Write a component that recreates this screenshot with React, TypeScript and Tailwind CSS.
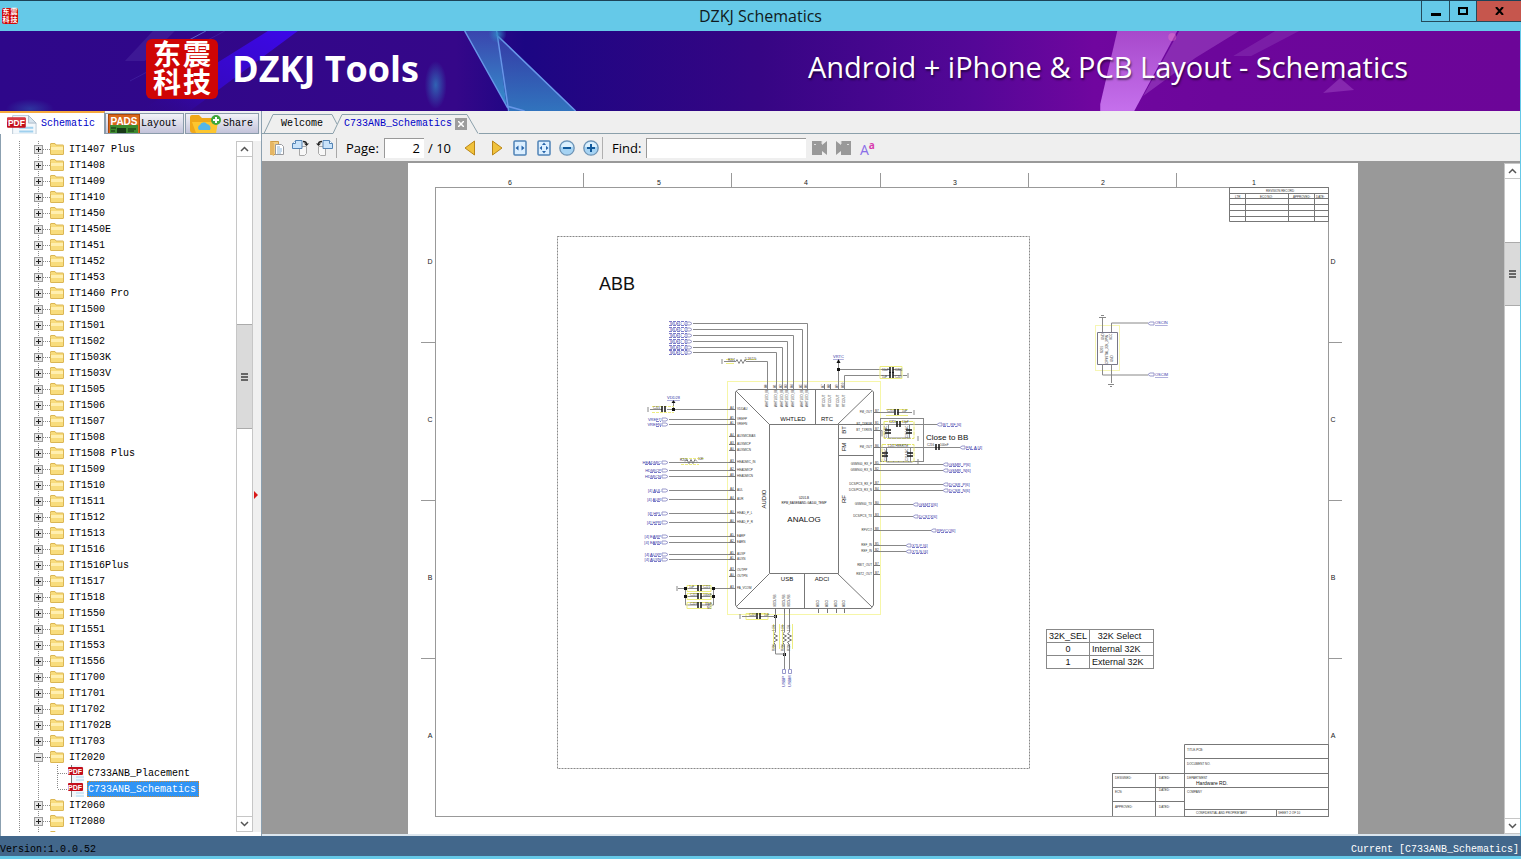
import { useState } from "react";

type Side = "left" | "right";

interface Net {
  y: number;
  x: number;
  name: string;
}

const FOLDERS_BEFORE = [
  "IT1407 Plus", "IT1408", "IT1409", "IT1410", "IT1450", "IT1450E", "IT1451", "IT1452", "IT1453",
  "IT1460 Pro", "IT1500", "IT1501", "IT1502", "IT1503K", "IT1503V", "IT1505", "IT1506", "IT1507",
  "IT1508", "IT1508 Plus", "IT1509", "IT1510", "IT1511", "IT1512", "IT1513", "IT1516", "IT1516Plus",
  "IT1517", "IT1518", "IT1550", "IT1551", "IT1553", "IT1556", "IT1700", "IT1701", "IT1702",
  "IT1702B", "IT1703",
];
// last folder has no name yet
const FOLDERS_AFTER = ["IT2060", "IT2080", ""];
const FILES = ["C733ANB_Placement", "C733ANB_Schematics"];

// ---------- icons ----------

function PdfIcon({ className }: { className: string }) {
  return (
    <svg viewBox="0 0 32 20" className={className} aria-hidden="true">
      <path d="M6 1h17l8 8v12H6z" fill="#f3f8fc" stroke="#b9c9d6" />
      <path d="M23 1v8h8z" fill="#d7e4ee" stroke="#a9b9c6" />
      <path d="M13 14h15M13 18h15" stroke="#9fd0ee" strokeWidth="2" />
      <rect x="0" y="3" width="20" height="11" rx="1" fill="#c40f1c" />
      <rect x="0" y="3" width="20" height="5" rx="1" fill="#d93a44" />
      <text x="10" y="12" textAnchor="middle" fontSize="9" fontWeight="700" fill="#fff" fontFamily="Liberation Sans, sans-serif">
        PDF
      </text>
    </svg>
  );
}

function PdfFileIcon() {
  return (
    <svg width="18" height="16" viewBox="0 0 18 16" className="shrink-0" aria-hidden="true">
      <path d="M3 0h10l3 3v13H3z" fill="#f1f7fb" />
      <path d="M3.500 0v16" stroke="#777" />
      <path d="M8 12h8M8 15h8" stroke="#a9d8f2" />
      <rect x="0" y="2" width="15" height="8" rx="1" fill="#c40f1c" />
      <text x="7" y="9" textAnchor="middle" fontSize="7" fontWeight="700" fill="#fff" fontFamily="Liberation Sans, sans-serif">
        PDF
      </text>
    </svg>
  );
}

function PadsIcon() {
  return (
    <svg width="32" height="19" viewBox="0 0 32 19" aria-hidden="true">
      <rect x="0.5" y="0.5" width="31" height="19" fill="#d8661a" stroke="#a9470c" />
      <rect x="2" y="11" width="28" height="8" fill="#3d8b2f" />
      <rect x="9" y="14" width="9" height="5" fill="#173a17" />
      <path d="M20 15h8M20 17h6M3 14h5M3 17h4" stroke="#102a10" strokeWidth="1" />
      <text x="16" y="11" textAnchor="middle" fontSize="10" fontWeight="700" fill="#fff" fontFamily="Liberation Sans, sans-serif">
        PADS
      </text>
    </svg>
  );
}

function ShareIcon() {
  return (
    <svg width="32" height="19" viewBox="0 0 32 19" aria-hidden="true">
      <path d="M0 3q0-2 2-2h7l3 3h12v15H3q-3 0-3-3z" fill="#f0a818" />
      <path d="M2 8h26l-2 11H6z" fill="#fdc62f" />
      <path d="M9 16a3 3 0 0 1 1-5 4 4 0 0 1 7-1 4 4 0 0 1 3 6z" fill="#55b6ea" />
      <circle cx="26" cy="6" r="5" fill="#3fa63c" />
      <path d="M26 3v6M23 6h6" stroke="#fff" strokeWidth="2" />
    </svg>
  );
}

function FolderIcon() {
  return (
    <svg width="14" height="12" viewBox="0 0 14 12" className="shrink-0" aria-hidden="true">
      <path d="M.5 2.5V1q0-.5.5-.5h4l1 1.500h7q.5 0 .5.5v8.500q0 .5-.5.5H1q-.5 0-.5-.5z" fill="#f8dc7c" stroke="#dbb654" />
      <path d="M1 4h12v3H1z" fill="#ffefb0" />
    </svg>
  );
}

function Expander({ open }: { open?: boolean }) {
  return (
    <svg width="16" height="16" viewBox="0 0 16 16" aria-hidden="true">
      <path d="M4.500 0V16M9 8.500H16" stroke="#8a8a8a" strokeDasharray="1 1" />
      <rect x=".5" y="4.500" width="8" height="8" fill="#e6e6e6" stroke="#9a9a9a" />
      <path d={open ? "M2 8.500H7" : "M2 8.500H7M4.500 6V11"} stroke="#222" />
    </svg>
  );
}

function Chevron({ down }: { down?: boolean }) {
  return (
    <svg width="9" height="6" viewBox="0 0 9 6" fill="none" aria-hidden="true">
      <path d={down ? "M1 1l3.500 3.500L8 1" : "M1 5l3.500-3.500L8 5"} stroke="#555" strokeWidth="1.500" />
    </svg>
  );
}

function OpenIcon() {
  return (
    <svg width="16" height="16" viewBox="0 0 16 16" aria-hidden="true">
      <path d="M1.500 1.500h8v13h-8z" fill="#f3cf85" stroke="#cc9b47" />
      <path d="M1 1l4 2v13l-4-2z" fill="#e5b664" />
      <path d="M6.500 4.500h6l2 2v8h-8z" fill="#fff" stroke="#999a9e" />
      <path d="M8 7h3M8 9h5M8 11h5M8 13h4" stroke="#8cb5da" />
    </svg>
  );
}

function RotateIcon({ flip }: { flip?: boolean }) {
  return (
    <svg width="17" height="16" viewBox="0 0 17 16" className={flip ? "-scale-x-100" : ""} aria-hidden="true">
      <path d="M7.500 6.500h7v7l-2 2h-5z" fill="#f7f7f7" stroke="#a8a8a8" />
      <path d="M3.500.5h6.500v8H.5v-5z" fill="#c9e3fa" stroke="#5484b5" />
      <path d="M3.500.5v3h-3" fill="#fff" stroke="#5484b5" />
      <path d="M11 1.500q3.500 0 3.500 2.500" fill="none" stroke="#222" strokeWidth="1.300" />
      <path d="M12 3.500h5L14.500 6z" fill="#222" />
    </svg>
  );
}

function TriangleIcon({ side }: { side: Side }) {
  return (
    <svg width="12" height="16" viewBox="0 0 12 16" aria-hidden="true">
      <path d={side === "left" ? "M10.500 1v14L1 8z" : "M1.500 1v14L11 8z"} fill="#f0c23c" stroke="#ba8618" strokeLinejoin="round" />
    </svg>
  );
}

function FitIcon({ full }: { full?: boolean }) {
  return (
    <svg width="14" height="16" viewBox="0 0 14 16" aria-hidden="true">
      <rect x="1" y="1" width="12" height="14" rx="1" fill="#dcefff" stroke="#4f83b6" strokeWidth="1.500" />
      <path d="M5.500 5.500v5L2.500 8zM8.500 5.500v5l3-2.500z" fill="#2866ab" />
      {full && (
        <>
          <rect x="5" y="5" width="4" height="6" fill="#dcefff" />
          <path d="M5 5h4L7 2.500zM5 11h4l-2 2.500z" fill="#2866ab" />
        </>
      )}
    </svg>
  );
}

function ZoomIcon({ plus }: { plus?: boolean }) {
  return (
    <svg width="16" height="16" viewBox="0 0 16 16" aria-hidden="true">
      <circle cx="8" cy="8" r="7.200" fill="#a6d3f3" stroke="#6d93b5" strokeWidth="1.300" />
      <path d="M2 7a6 5 0 0 1 12 0z" fill="#dcf0fd" />
      <path d={plus ? "M4 8h8M8 4v8" : "M4 8h8"} stroke="#125a9c" strokeWidth="2" />
    </svg>
  );
}

function FindIcon({ side }: { side: Side }) {
  return (
    <svg width="15" height="14" viewBox="0 0 15 14" className={side === "right" ? "-scale-x-100" : ""} aria-hidden="true">
      <path d="M0 0h10v4l5-4v14l-5-4v4H0z" fill="#999" />
      <path d="M2 3.500h2M10 0v3" stroke="#ddd" />
    </svg>
  );
}

// ---------- shared parts ----------

function Logo({ small }: { small?: boolean }) {
  return (
    <div
      className={
        small
          ? "grid size-4 grid-cols-2 place-items-center rounded-xs bg-[#d00a0a] text-[7px] leading-[7px] font-bold text-white"
          : "grid h-[60px] w-[72px] grid-cols-2 place-items-center rounded-md bg-[#cf0505] px-1.5 pb-1 text-[28px] leading-[28px] font-bold text-white"
      }
      style={{ fontFamily: '"Noto Sans CJK SC", sans-serif' }}
    >
      <span>东</span>
      <span>震</span>
      <span>科</span>
      <span>技</span>
    </div>
  );
}

function ScrollBar({ kind }: { kind: "tree" | "page" }) {
  const tree = kind === "tree";
  return (
    <div className={`flex shrink-0 flex-col border-x border-[#c6c6c6] bg-white ${tree ? "w-[17px]" : "w-4 border-r-0"}`}>
      <button aria-label="Scroll up" className="flex h-4 shrink-0 items-center justify-center border-y border-[#c6c6c6]">
        <Chevron />
      </button>
      <div className={tree ? "flex-[167]" : "flex-[63]"} />
      <div
        className={`flex shrink-0 flex-col items-center justify-center gap-px border-y border-[#ababab] bg-[#dadada] ${tree ? "h-[105px]" : "h-16"}`}
      >
        <span className="h-0.5 w-[7px] bg-[#666]" />
        <span className="h-0.5 w-[7px] bg-[#666]" />
        <span className="h-0.5 w-[7px] bg-[#666]" />
      </div>
      <div className={tree ? "flex-[387]" : "flex-[514]"} />
      <button aria-label="Scroll down" className="flex h-4 shrink-0 items-center justify-center border-y border-[#c6c6c6]">
        <Chevron down />
      </button>
    </div>
  );
}

function TitleBar() {
  return (
    <header className="grid h-[31px] shrink-0 grid-cols-3 items-center border-t border-[#1c4257] bg-[#65c9e8] text-[#101a20]">
      <div className="pb-px pl-0.5">
        <Logo small />
      </div>
      <h1 className="text-center text-[16px] leading-5">DZKJ Schematics</h1>
      <div className="flex h-[21px] self-start justify-self-end border-b border-[#24495a]">
        <button aria-label="Minimize" className="flex w-7 items-center justify-center border-l border-[#24495a]">
          <span className="mt-1.5 h-[3px] w-2.5 bg-black" />
        </button>
        <button aria-label="Maximize" className="flex w-[27px] items-center justify-center border-l border-[#24495a]">
          <span className="h-2 w-2.5 border-2 border-black" />
        </button>
        <button aria-label="Close" className="flex w-[45px] items-center justify-center border-l border-[#24495a] bg-[#c6564d]">
          <svg width="9" height="8" viewBox="0 0 9 8" aria-hidden="true">
            <path d="M1 0l7 8M8 0L1 8" stroke="#000" strokeWidth="2" />
          </svg>
        </button>
      </div>
    </header>
  );
}

function Banner() {
  return (
    <div className="relative flex h-20 shrink-0 items-center overflow-hidden border-r border-[#65c9e8]">
      <svg className="absolute inset-0 size-full" viewBox="0 0 1521 80" preserveAspectRatio="none" aria-hidden="true">
        <defs>
          <linearGradient id="bg">
            <stop offset="0" stopColor="#2e078a" />
            <stop offset=".3" stopColor="#350789" />
            <stop offset=".345" stopColor="#1c0683" />
            <stop offset=".5" stopColor="#360584" />
            <stop offset=".64" stopColor="#540797" />
            <stop offset=".72" stopColor="#70069f" />
            <stop offset=".8" stopColor="#6c069b" />
            <stop offset="1" stopColor="#6c0598" />
          </linearGradient>
          <linearGradient id="beam" x1="1" y1="0" x2="0" y2="1">
            <stop offset="0" stopColor="#3c08e8" />
            <stop offset=".6" stopColor="#3608c4" />
            <stop offset="1" stopColor="#2e078a" stopOpacity="0" />
          </linearGradient>
          <linearGradient id="shard" x1="0" y1="0" x2="0" y2="1">
            <stop offset="0" stopColor="#3a45ae" />
            <stop offset="1" stopColor="#368fcc" />
          </linearGradient>
          <linearGradient id="pink" x1="0" y1="0" x2="0" y2="1">
            <stop offset="0" stopColor="#a749cb" />
            <stop offset="1" stopColor="#c570ec" />
          </linearGradient>
          <radialGradient id="glow">
            <stop offset="0" stopColor="#2f86c4" stopOpacity=".9" />
            <stop offset="1" stopColor="#2f86c4" stopOpacity="0" />
          </radialGradient>
        </defs>
        <rect width="1521" height="80" fill="url(#bg)" />
        <path d="M145 30L175 0h-22L125 30z" fill="#4a2aa0" opacity=".5" />
        <path d="M178 15L206 0" stroke="#5a63c8" />
        <path d="M130 50L225 0" stroke="#4629a8" opacity=".6" />
        <path d="M268 0h30L190 80h-50z" fill="url(#beam)" />
        <ellipse cx="436" cy="54" rx="11" ry="24" fill="url(#glow)" opacity=".8" />
        <ellipse cx="30" cy="78" rx="24" ry="10" fill="url(#glow)" opacity=".4" />
        <path d="M465 0h32l10 75z" fill="url(#shard)" />
        <path d="M497 3l79 77h-66l-3-5z" fill="url(#shard)" opacity=".8" />
        <path d="M465 0l43 77M497 0l12 80M497 4l79 76M507 75l18 5" stroke="#6796e8" strokeWidth="1.500" fill="none" />
        <circle cx="498" cy="3" r="9" fill="url(#glow)" />
        <path d="M1118 0h60l-43 80h-34v-7z" fill="url(#pink)" />
        <path d="M1180 0h60l-44 27-52 38z" fill="#a04ac4" opacity=".55" />
        <path d="M1276 0h24l-48 25h-18z" fill="#9040b8" opacity=".4" />
        <path d="M1324 62l17-15 14 12z" fill="#a04ac4" opacity=".5" />
        <circle cx="1173" cy="6" r="4" fill="#f07cc8" opacity=".4" />
      </svg>
      <div className="relative flex flex-1 items-center justify-between pr-28 pb-1 pl-[146px] text-white">
        <div className="flex items-center gap-3.5">
          <Logo />
          <span className="text-[36px] leading-10 font-bold">DZKJ Tools</span>
        </div>
        <span className="pb-1 text-[29px] leading-10 text-shadow-[1px_2px_2px_#00000080]">Android + iPhone &amp; PCB Layout - Schematics</span>
      </div>
    </div>
  );
}

// ---------- sidebar ----------

function FolderRow({ name, open }: { name: string; open?: boolean }) {
  return (
    <li className="flex h-4 shrink-0 items-center">
      <button aria-label={`Toggle ${name}`} className="flex shrink-0">
        <svg width="34" height="16" aria-hidden="true">
          <path d="M19.500 0V16" stroke="#8a8a8a" strokeDasharray="1 1" />
        </svg>
        <Expander open={open} />
      </button>
      <FolderIcon />
      <span className="pt-0.5 pl-[5px] whitespace-pre">{name}</span>
    </li>
  );
}

function FileRow({ name, last, selected, onSelect }: { name: string; last: boolean; selected: boolean; onSelect: () => void }) {
  return (
    <li className="flex h-4 shrink-0 items-center">
      <svg width="68" height="16" className="shrink-0" aria-hidden="true">
        <path d={`M19.500 0V16M38.500 0V16M57.500 0V${last ? 8 : 16}M58 8.500H68`} stroke="#8a8a8a" strokeDasharray="1 1" />
      </svg>
      <PdfFileIcon />
      <button
        onClick={onSelect}
        className={
          selected
            ? "ml-px h-4 border border-dotted border-[#d08a30] bg-[#2f94f5] pr-0.5 leading-4 text-white"
            : "ml-px h-4 border border-transparent leading-4"
        }
      >
        {name}
      </button>
    </li>
  );
}

function Sidebar() {
  const [selected, setSelected] = useState("C733ANB_Schematics");

  return (
    <aside className="flex w-[261px] shrink-0 flex-col bg-white font-[Liberation_Mono,monospace] text-[10px] leading-4">
      <div className="flex h-[23px] shrink-0 items-end border-[#8ba0b0] bg-[#efeff2]">
        <button className="flex h-full w-[105px] items-center gap-1 border-t-2 border-r border-t-[#f5a83c] border-r-[#8b9cab] bg-white pl-[7px] text-[#0000c8]">
          <PdfIcon className="h-5 w-[30px]" />
          Schematic
        </button>
        <button className="flex h-[21px] w-[79px] items-center gap-px border border-[#8b9cab] bg-linear-to-b from-[#f3f3f8] to-[#c3c3da] pl-[2px]">
          <PadsIcon />
          Layout
        </button>
        <button className="ml-px flex h-[21px] w-[74px] items-center gap-px border border-[#8b9cab] bg-linear-to-b from-[#f3f3f8] to-[#c3c3da] pl-[4px]">
          <ShareIcon />
          Share
        </button>
      </div>
      <div className="flex min-h-0 flex-1 border-l border-[#8ba0b0] pt-[7px] pb-1">
        <ul className="-ml-px flex min-w-0 flex-1 flex-col overflow-hidden">
          {FOLDERS_BEFORE.map(name => (
            <FolderRow key={name} name={name} />
          ))}
          <FolderRow name="IT2020" open />
          {FILES.map((name, i) => (
            <FileRow
              key={name}
              name={name}
              last={i === FILES.length - 1}
              selected={selected === name}
              onSelect={() => setSelected(name)}
            />
          ))}
          {FOLDERS_AFTER.map(name => (
            <FolderRow key={name} name={name} />
          ))}
        </ul>
        <ScrollBar kind="tree" />
        {/* splitter */}
        <div className="flex w-2 items-center bg-[#f0f0f0] pt-4">
          <svg width="5" height="8" viewBox="0 0 5 8" aria-hidden="true">
            <path d="M1 0l4 4-4 4z" fill="#d81818" />
          </svg>
        </div>
      </div>
    </aside>
  );
}

// ---------- document view ----------

function DocTabs() {
  return (
    <div className="flex h-[23px] shrink-0 items-end font-[Liberation_Mono,monospace] text-[10px] leading-4">
      <button className="relative h-5 w-[71px] pl-[9px]">
        <svg width="80" height="20" className="absolute top-0 left-0" fill="none" aria-hidden="true">
          <path d="M0 19.500H2L11 .5H70L75 10M2 19.500H71" stroke="#8ba0ab" />
        </svg>
        <span className="relative">Welcome</span>
      </button>
      <div className="relative flex h-5 w-[146px] items-center gap-[3px] pl-[11px]">
        <svg width="146" height="20" className="absolute top-0 left-0" fill="none" aria-hidden="true">
          <path d="M0 19.500L9 .5H134L145 19.500" stroke="#8ba0ab" fill="#efefef" />
        </svg>
        <button className="relative text-[#0000c8]">C733ANB_Schematics</button>
        <button aria-label="Close tab" className="relative flex size-3 items-center justify-center bg-[#9d9d9d]">
          <svg width="6" height="6" viewBox="0 0 6 6" aria-hidden="true">
            <path d="M0 0l6 6M6 0L0 6" stroke="#fff" strokeWidth="1.500" />
          </svg>
        </button>
      </div>
      <div className="h-5 flex-1 border-b border-[#8ba0ab]" />
    </div>
  );
}

function Toolbar() {
  return (
    <div className="flex h-[29px] shrink-0 items-center border-b-2 border-[#999] pl-[7px] text-[13px] leading-5 text-black">
      <div className="flex h-5 items-center gap-[7px] border-r border-[#a8a8a8] pr-[3px]">
        <button aria-label="Open"><OpenIcon /></button>
        <button aria-label="Rotate right"><RotateIcon /></button>
        <button aria-label="Rotate left"><RotateIcon flip /></button>
      </div>
      <label htmlFor="page" className="w-[47px] pl-[9px]">Page:</label>
      <input
        id="page"
        defaultValue="2"
        className="h-5 w-10 border-t border-l border-[#999] bg-white pr-1 text-right outline-none"
      />
      <span className="w-10 pl-1">/ 10</span>
      <div className="flex h-[22px] items-center gap-[10px] border-r border-[#b0b0b0] pr-[3px]">
        <button aria-label="Previous page" className="pr-[5px]"><TriangleIcon side="left" /></button>
        <button aria-label="Next page"><TriangleIcon side="right" /></button>
        <button aria-label="Fit width"><FitIcon /></button>
        <button aria-label="Fit page"><FitIcon full /></button>
        <div className="-ml-0.5 flex gap-2">
          <button aria-label="Zoom out"><ZoomIcon /></button>
          <button aria-label="Zoom in"><ZoomIcon plus /></button>
        </div>
      </div>
      <label htmlFor="find" className="w-[43px] pl-[9px]">Find:</label>
      <input id="find" className="h-5 w-40 border-t border-l border-[#999] bg-white px-1 outline-none" />
      <div className="flex items-center gap-[9px] pl-1.5">
        <button aria-label="Find previous"><FindIcon side="left" /></button>
        <button aria-label="Find next"><FindIcon side="right" /></button>
        <button aria-label="Match case" className="flex items-start">
          <span className="pt-1 text-[14px] leading-3.5 text-[#8a6ee8]">A</span>
          <span className="text-[10px] leading-3 font-bold text-[#d83cae]">a</span>
        </button>
      </div>
    </div>
  );
}

// ---------- schematic sheet ----------

const LEFT_NETS: Net[] = [
  { y: 419, x: 652, name: "VREFT" },
  { y: 424, x: 652, name: "VREFN" },
  { y: 462, x: 641, name: "HEADMIC" },
  { y: 470, x: 646, name: "HDMICP" },
  { y: 476, x: 646, name: "HDMICN" },
  { y: 490, x: 649, name: "[4] AUL" },
  { y: 499, x: 649, name: "[4] AUR" },
  { y: 513, x: 646, name: "[4] HPL" },
  { y: 522, x: 646, name: "[4] HPR" },
  { y: 536, x: 649, name: "[4] EARP" },
  { y: 542, x: 649, name: "[4] EARN" },
  { y: 554, x: 646, name: "[4] AUXP" },
  { y: 559, x: 646, name: "[4] AUXN" },
];

const RIGHT_NETS: Net[] = [
  { y: 424, x: 937, name: "BT_RF [6]" },
  { y: 447, x: 960, name: "FM_A [4]" },
  { y: 464, x: 943, name: "GSMR_P[6]" },
  { y: 470, x: 943, name: "GSMR_N[6]" },
  { y: 484, x: 943, name: "DCSR_P[6]" },
  { y: 490, x: 943, name: "DCSR_N[6]" },
  { y: 504, x: 913, name: "GSMTX[6]" },
  { y: 516, x: 913, name: "DCSTX[6]" },
  { y: 530, x: 931, name: "RFVCO[6]" },
  { y: 545, x: 906, name: "XTLP [6]" },
  { y: 551, x: 906, name: "XTLN [6]" },
];

const TOP_NETS = [
  { y: 323, x: 807 }, { y: 329, x: 802 }, { y: 335, x: 793 },
  { y: 341, x: 787 }, { y: 347, x: 782 }, { y: 352, x: 776 },
];

const LEFT_PINS = [
  [409, "VDDAU"], [419, "VREFP"], [424, "VREFN"], [436, "AUXMICBIAS"], [444, "AUXMICP"], [450, "AUXMICN"],
  [462, "HEADMIC_IN"], [470, "HEADMICP"], [476, "HEADMICN"], [490, "AUL"], [499, "AUR"], [513, "HEAD_P_L"],
  [522, "HEAD_P_R"], [536, "EARP"], [542, "EARN"], [554, "AUXP"], [559, "AUXN"], [570, "OUTPP"],
  [576, "OUTPN"], [588, "PA_VCOM"],
] as const;

const RIGHT_PINS = [
  [412, "FM_OUT"], [424, "BT_TXRXP"], [430, "BT_TXRXN"], [447, "FM_OUT"], [464, "GSM900_RX_P"], [470, "GSM900_RX_N"],
  [484, "DCS/PCS_RX_P"], [490, "DCS/PCS_RX_N"], [504, "GSM900_TX"], [516, "DCS/PCS_TX"], [530, "RFVCO"],
  [545, "REF_IN"], [551, "REF_IN"], [565, "RBIT_OUT"], [574, "RBT2_OUT"],
] as const;

function Cap({ x, y, vertical }: { x: number; y: number; vertical?: boolean }) {
  return (
    <path
      d={vertical ? `M${x - 3} ${y - 1}h6M${x - 3} ${y + 2}h6` : `M${x - 1} ${y - 3}v6M${x + 2} ${y - 3}v6`}
      stroke="#111"
      strokeWidth="1.500"
    />
  );
}

function Schematic() {
  return (
    <svg width="950" height="671" viewBox="408 163 950 671" fill="none" fontFamily="Liberation Sans, sans-serif" aria-label="Schematic sheet 2">
      {/* sheet frame */}
      <rect x="435.500" y="187.500" width="893" height="629" stroke="#999" />
      <path
        d="M583.500 173v14M731.500 173v14M880.500 173v14M1028.500 173v14M1176.500 173v14M421 342.500h14M421 500.500h14M421 658.500h14M1328 342.500h14M1328 500.500h14M1328 658.500h14"
        stroke="#999"
      />
      <g fontSize="7" fill="#222" textAnchor="middle">
        {[510, 659, 806, 955, 1103, 1254].map((x, i) => (
          <text key={x} x={x} y="185">{6 - i}</text>
        ))}
        {["D", "C", "B", "A"].map((c, i) => (
          <g key={c}>
            <text x="430" y={264 + i * 158}>{c}</text>
            <text x="1333" y={264 + i * 158}>{c}</text>
          </g>
        ))}
      </g>
      <rect x="557.500" y="236.500" width="472" height="532" stroke="#888" strokeDasharray="2 1" />
      <text x="599" y="290" fontSize="18" fill="#111">ABB</text>

      {/* revision record */}
      <path
        d="M1229.500 187.500h99v34h-99zM1229 193.500h99M1229 198.500h99M1229 204.500h99M1229 210.500h99M1229 216.500h99M1245.500 193v28M1288.500 193v28M1314.500 193v28"
        stroke="#777"
      />
      <g fontSize="3" fill="#333">
        <text x="1266" y="192">REVISION RECORD</text>
        <text x="1235" y="198">LTR</text>
        <text x="1260" y="198">ECO NO:</text>
        <text x="1293" y="198">APPROVED:</text>
        <text x="1316" y="198">DATE:</text>
      </g>

      {/* chip body */}
      <rect x="727.500" y="381.500" width="153" height="233" stroke="#f6f6a8" />
      <g stroke="#777">
        <path d="M738 389.500H871L873.500 392V605L871 608.500H738L735.500 605V392z" />
        <path d="M769.500 424.500H838.500V573.500H769.500zM736 391L769 424M872 391L838 424M736 607L769 574M872 607L838 574" />
        <path d="M815.500 390v34M769 424.500h69M838.500 424.500H873M838 438.500h35M838 455.500h35M804.500 573v35" />
      </g>
      <g fill="#111" textAnchor="middle" fontSize="6">
        <text x="793" y="421">WHTLED</text>
        <text x="827" y="421">RTC</text>
        <text x="787" y="581">USB</text>
        <text x="822" y="581">ADCI</text>
        <text transform="translate(766 499) rotate(-90)">AUDIO</text>
        <text transform="translate(846 430) rotate(-90)">BT</text>
        <text transform="translate(846 447) rotate(-90)">FM</text>
        <text transform="translate(846 499) rotate(-90)">RF</text>
        <text x="804" y="522" fontSize="8">ANALOG</text>
        <text x="804" y="499" fontSize="3">U201-B</text>
        <text x="804" y="504" fontSize="3">RPM_BASEBAND-GA100_TEMP</text>
      </g>

      {/* pins */}
      <g fontSize="3" fill="#333">
        {LEFT_PINS.map(([y, name]) => (
          <g key={y}>
            <text x="737" y={y + 1}>{name}</text>
            <text x="730" y={y}>A{y % 9}</text>
            <path d={`M729 ${y + 0.5}h6`} stroke="#777" />
          </g>
        ))}
        {RIGHT_PINS.map(([y, name]) => (
          <g key={y}>
            <text x="872" y={y + 1} textAnchor="end">{name}</text>
            <text x="875" y={y}>B{y % 9}</text>
            <path d={`M874 ${y + 0.5}h6`} stroke="#777" />
          </g>
        ))}
        {[767, 776, 782, 787, 793, 802, 807, 824, 830, 838, 844].map((x, i) => (
          <g key={x}>
            <text transform={`translate(${x + 1} 407) rotate(-90)`}>{i < 7 ? "WHTLED_IB" : "RTCOUT"}</text>
            <text transform={`translate(${x} 388) rotate(-90)`}>A{i}</text>
            <path d={`M${x + 0.5} 384v6`} stroke="#777" />
          </g>
        ))}
        {[775, 784, 789, 818, 827, 836, 844].map((x, i) => (
          <g key={x}>
            <text transform={`translate(${x + 1} 607) rotate(-90)`}>{i < 3 ? "VDDUSB" : "ADCI"}</text>
            <path d={`M${x + 0.5} 608v5`} stroke="#777" />
          </g>
        ))}
      </g>

      {/* white led bus */}
      {TOP_NETS.map((n, i) => (
        <g key={n.y}>
          <path d={`M693 ${n.y + 0.5}H${n.x + 0.5}V389`} stroke="#888" />
          <path d={`M687 ${n.y - 1}h3l2 1.500-2 1.500h-3z`} stroke="#99c" />
          <text x="686" y={n.y + 2} textAnchor="end" fontSize="4" fill="#3838a8">WLED_{i}</text>
          <path d={`M669 ${n.y - 1.5}h18M669 ${n.y + 2.5}h18`} stroke="#7a7ac8" strokeDasharray="3 1" />
        </g>
      ))}
      <path d="M724 361.500h12l1-2 2 4 2-4 2 4 2-4 1 2H767.500V389M722 359v5" stroke="#888" />
      <path d="M726 359.500h8M746 359.500h10M726 363.500h8" stroke="#eded80" />
      <text x="728" y="361" fontSize="3" fill="#333">R201</text>
      <text x="745" y="360" fontSize="3" fill="#333">5.1K/1%</text>

      {/* left nets */}
      {LEFT_NETS.map(n => (
        <g key={n.y}>
          <path d={`M669 ${n.y + 0.5}H729`} stroke="#888" />
          <path d={`M662 ${n.y - 1}h4l2 1.500-2 1.500h-4z`} stroke="#99c" />
          <text x="661" y={n.y + 2} textAnchor="end" fontSize="4" fill="#3838a8">{n.name}</text>
          <path d={`M${n.x + 4} ${n.y + 2.5}H661`} stroke="#7a7ac8" strokeDasharray="3 1" />
        </g>
      ))}
      <path d="M650 409.500h12M667 409.500h62M648 407v5M673.500 409v-7" stroke="#888" />
      <path d="M652 406.500h22M652 412.500h22M681 458.500h23M681 464.500h18" stroke="#eded80" strokeDasharray="3 1" />
      <Cap x={663} y={409} />
      <path d="M671.500 403h4l-2-3zM672 408h3v3h-3z" fill="#111" />
      <text x="667" y="399" fontSize="4" fill="#3838a8" textDecoration="underline">VDD28</text>
      <text x="653" y="409" fontSize="3" fill="#333">C201</text>
      <path d="M685 461.500l2-2 2 4 2-4 2 4 2-4 2 2" stroke="#777" />
      <text x="680" y="461" fontSize="3" fill="#333">R205</text>
      <text x="698" y="460" fontSize="3" fill="#333">10K</text>

      {/* right nets */}
      {RIGHT_NETS.map(n => (
        <g key={n.y}>
          <path d={`M880 ${n.y + 0.5}H${n.x}`} stroke="#888" />
          <path d={`M${n.x + 5} ${n.y - 1}h-3l-2 1.500 2 1.500h3z`} stroke="#99c" />
          <text x={n.x + 6} y={n.y + 2} fontSize="4" fill="#3838a8">{n.name}</text>
          <path d={`M${n.x + 6} ${n.y + 2.5}h14`} stroke="#7a7ac8" strokeDasharray="3 1" />
        </g>
      ))}

      {/* rtc supply */}
      <path d="M838.500 389V360M838 369.500h52M844.500 389V375.500h46M893 369.500h8v6h-8M903 375.500h4M908 373v5M880 412.500h14M897 412.500h15M914 410v5" stroke="#888" />
      <path d="M836.500 363h4l-2-4zM837 368h3v3h-3z" fill="#111" />
      <path d="M880 366.500h22v12h-22zM886 409.500h22M886 415.500h22" stroke="#eded80" />
      <Cap x={891} y={370} />
      <Cap x={891} y={375} />
      <Cap x={896} y={412} />
      <g fontSize="4" fill="#333">
        <text x="833" y="358" fill="#3838a8" textDecoration="underline">VRTC</text>
        <text x="882" y="371" fontSize="3">10uF</text>
        <text x="895" y="371" fontSize="3">C206</text>
        <text x="882" y="378" fontSize="3">1uF</text>
        <text x="895" y="378" fontSize="3">C207</text>
        <text x="887" y="412" fontSize="3">C210</text>
        <text x="902" y="412" fontSize="3">1uF</text>
      </g>

      {/* bt / fm matching */}
      <rect x="880.500" y="418.500" width="43" height="43" stroke="#888" />
      <path d="M884 421.500h30v17h-30zM882 444.500h32v17h-32z" stroke="#e6e66a" strokeDasharray="4 1" />
      <path d="M888.500 424v14h22M909.500 424v14M886.500 447v15h26M910.500 447v15M880 430.500h2v6M918 436v5M918 459v5" stroke="#888" />
      <Cap x={898} y={424} />
      <Cap x={888} y={431} vertical />
      <Cap x={909} y={431} vertical />
      <Cap x={885} y={454} vertical />
      <Cap x={910} y={454} vertical />
      <Cap x={937} y={447} />
      <g fontSize="3" fill="#333">
        <text x="889" y="423">C211</text>
        <text x="902" y="423">10pF</text>
        <text x="888" y="447">L201 FERRITE</text>
        <text x="927" y="446">C216</text>
        <text x="940" y="446">100nF</text>
        {[887, 908].map(x => (
          <g key={x}>
            <text transform={`translate(${x} 438) rotate(-90)`}>C212 NC</text>
            <text transform={`translate(${x} 461) rotate(-90)`}>C214 NC</text>
          </g>
        ))}
      </g>
      <text x="926" y="440" fontSize="8" fill="#111">Close to BB</text>

      {/* decoupling on PA_VCOM */}
      <path d="M678 588.500h20M701 588.500h34M677 586v5M685.500 588v17h12M713.500 588v17h-12M685 596.500h13M701 596.500h13" stroke="#888" />
      <path d="M687 585.500h24v6h-24zM687 593.500h24v6h-24zM687 602.500h24v6h-24zM746 613.500h22v6h-22z" stroke="#eded80" />
      <Cap x={699} y={588} />
      <Cap x={699} y={596} />
      <Cap x={699} y={605} />
      <path d="M684 587h3v3h-3zM684 595h3v3h-3zM712 587h3v3h-3zM712 595h3v3h-3zM774 615h3v3h-3zM783 653h3v3h-3z" fill="#111" />
      <g fontSize="3" fill="#333">
        <text x="689" y="588">1uF</text>
        <text x="703" y="588">C221</text>
        <text x="690" y="596">C222</text>
        <text x="703" y="596">100nF</text>
        <text x="690" y="605">C223</text>
        <text x="705" y="605">33pF</text>
        <text x="707" y="609">NC</text>
      </g>

      {/* usb */}
      <path d="M740 614v5M742 616.500h14M760 616.500h15M775.500 613v19M775.500 645v9h9M784.500 613v19M784.500 645v24M789.500 613v19M789.500 645v24" stroke="#888" />
      <path d="M775.500 632l-2 2 4 2-4 2 4 2-4 2 2 3M784.500 632l-2 2 4 2-4 2 4 2-4 2 2 3M789.500 632l-2 2 4 2-4 2 4 2-4 2 2 3" stroke="#777" />
      <path d="M773.500 624v25M779.500 624v25M782.500 624v25M792.500 624v25" stroke="#eded80" />
      <path d="M782.500 669.500h3v4h-3zM788.500 669.500h3v4h-3z" stroke="#99c" />
      <Cap x={758} y={616} />
      <g fontSize="3" fill="#333">
        <text x="749" y="616">C225</text>
        <text x="764" y="616">1uF</text>
        {[775, 784, 790].map(x => (
          <g key={x}>
            <text transform={`translate(${x} 631) rotate(-90)`}>1.5K</text>
            <text transform={`translate(${x} 651) rotate(-90)`}>R210</text>
          </g>
        ))}
        <text transform="translate(785 687) rotate(-90)" fontSize="4" fill="#3838a8">USBP</text>
        <text transform="translate(791 687) rotate(-90)" fontSize="4" fill="#3838a8">USBM</text>
      </g>

      {/* 32k crystal */}
      <rect x="1095.500" y="325.500" width="24" height="45" stroke="#f6f6b4" />
      <path d="M1097.500 332.500h20v32h-20z" stroke="#778" />
      <path d="M1102.500 332V317M1099 317.500h7M1101 315.500h3M1111.500 332v-9H1148M1102.500 364v11H1148M1111.500 364v19M1108 384.500h6M1110 386.500h2" stroke="#888" />
      <path d="M1154 322h-4l-2 1.500 2 1.500h4zM1154 373h-4l-2 1.500 2 1.500h4z" stroke="#99c" />
      <g fontSize="3" fill="#333">
        <text x="1155" y="324" fontSize="4" fill="#3838a8" textDecoration="underline">OSCIN</text>
        <text x="1155" y="376" fontSize="4" fill="#3838a8" textDecoration="underline">OSCIM</text>
        <text transform="translate(1104 340) rotate(-90)">GND</text>
        <text transform="translate(1112 340) rotate(-90)">VCC</text>
        <text transform="translate(1103 353) rotate(-90)">X201</text>
        <text transform="translate(1108 364) rotate(-90)">CRYSTAL_32K_3PIN</text>
        <text transform="translate(1113 362) rotate(-90)">GND</text>
      </g>

      {/* title block */}
      <path
        d="M1184.500 744.500h144v72h-144zM1184 758.500h144M1112 773.500h216M1112 787.500h216M1112 801.500h72M1184 809.500h144M1276.500 809v7M1112.500 773v43M1155.500 773v43"
        stroke="#777"
      />
      <g fontSize="3" fill="#333">
        <text x="1187" y="751">TITLE-PCB:</text>
        <text x="1187" y="765">DOCUMENT NO.</text>
        <text x="1187" y="779">DEPARTMENT</text>
        <text x="1187" y="793">COMPANY</text>
        <text x="1196" y="814">CONFIDENTIAL AND PROPRIETARY</text>
        <text x="1278" y="814">SHEET: 2 OF 10</text>
        <text x="1115" y="779">DESIGNED:</text>
        <text x="1115" y="793">ECN:</text>
        <text x="1115" y="808">APPROVED:</text>
        <text x="1159" y="779">DATED:</text>
        <text x="1159" y="791">DATED:</text>
        <text x="1159" y="808">DATED:</text>
        <text x="1196" y="785" fontSize="5" fill="#111">Hardware RD.</text>
      </g>
    </svg>
  );
}

function SelectTable() {
  return (
    <table className="absolute top-[466px] left-[638px] w-[108px] border-collapse font-[Liberation_Sans,sans-serif] text-[9px] leading-3 text-[#111]">
      <thead>
        <tr>
          <th className="w-[43px] border border-[#888] p-0 text-center font-normal">32K_SEL</th>
          <th className="border border-[#888] py-0 pr-1 pl-0 text-center font-normal">32K Select</th>
        </tr>
      </thead>
      <tbody>
        <tr>
          <td className="border border-[#888] p-0 text-center">0</td>
          <td className="border border-[#888] py-0 pr-0 pl-0.5">Internal 32K</td>
        </tr>
        <tr>
          <td className="border border-[#888] p-0 text-center">1</td>
          <td className="border border-[#888] py-0 pr-0 pl-0.5">External 32K</td>
        </tr>
      </tbody>
    </table>
  );
}

export default function App() {
  return (
    <div className="flex h-screen flex-col overflow-hidden bg-[#65c9e8] font-[Open_Sans,sans-serif] text-black">
      <TitleBar />
      <Banner />
      <div className="flex min-h-0 flex-1 bg-[#efefef]">
        <Sidebar />
        <main className="flex min-w-0 flex-1 flex-col border-r border-l border-r-[#65c9e8] border-l-[#8ba0b0]">
          <DocTabs />
          <Toolbar />
          <div className="flex min-h-0 flex-1 border-b-2 border-[#dce6ee]">
            <div className="min-w-0 flex-1 overflow-hidden bg-[#999]">
              <div className="relative mx-auto h-full w-[950px] overflow-hidden bg-white">
                <Schematic />
                <SelectTable />
              </div>
            </div>
            <ScrollBar kind="page" />
          </div>
        </main>
      </div>
      <footer className="mb-[3px] flex h-5 shrink-0 items-end justify-between bg-[#42678b] pr-0.5 font-[Liberation_Mono,monospace] text-[10px] leading-3">
        <span>Version:1.0.0.52</span>
        <span className="text-white">Current [C733ANB_Schematics]</span>
      </footer>
    </div>
  );
}
